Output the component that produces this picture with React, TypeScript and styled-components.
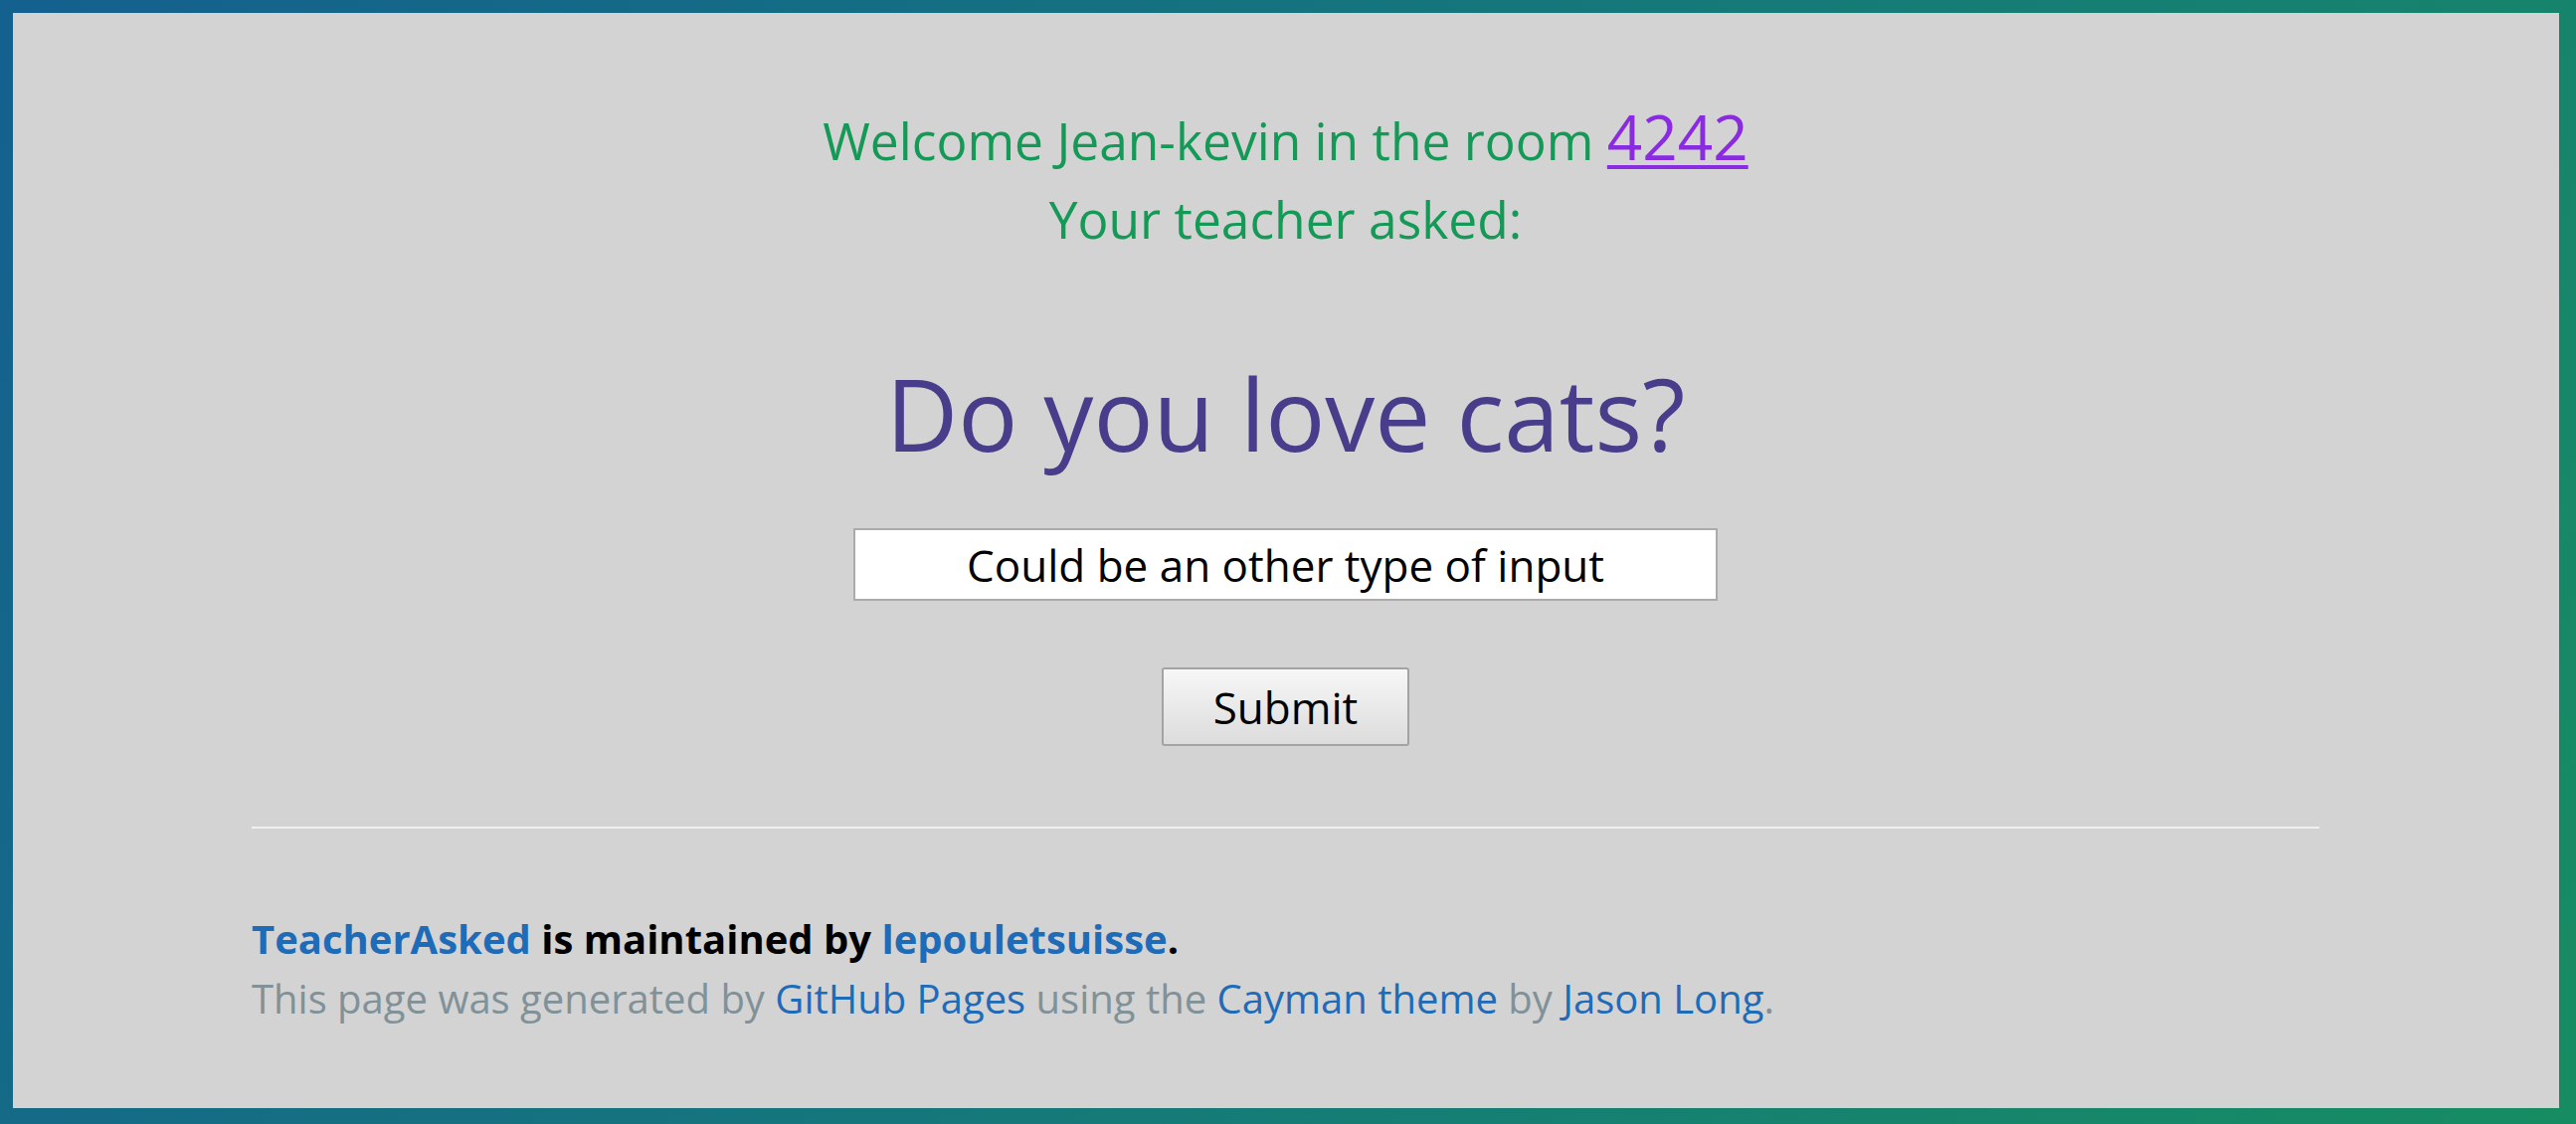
import React from "react";
import styled, { createGlobalStyle } from "styled-components";

const Global = createGlobalStyle`
  html, body { margin: 0; padding: 0; }
  body {
    font-family: "Open Sans", "Noto Sans", "Liberation Sans", sans-serif;
    background: linear-gradient(120deg, #14608f 0%, #157a78 55%, #178c62 100%);
    min-height: 100vh;
  }
  * { box-sizing: border-box; }
`;

const Frame = styled.div`
  padding: 13px 17px 16px 13px;
  height: 1130px;
`;

const Page = styled.main`
  background: #d3d3d3;
  height: 100%;
  padding: 89px 241px 0 240px;
  display: flex;
  flex-direction: column;
`;

const Greeting = styled.div`
  text-align: center;
  color: #159957;
  font-size: 51.5px;
  line-height: 79.2px;
`;

const RoomLink = styled.a`
  color: #8a2be2;
  font-size: 62px;
  line-height: 0;
  text-decoration: underline;
  text-decoration-thickness: 4px;
  text-underline-offset: 5px;
`;

const Question = styled.h1`
  margin: 80px 0 0;
  text-align: center;
  color: #483d8b;
  font-size: 100px;
  font-weight: 400;
  line-height: 150px;
`;

const Form = styled.form`
  display: flex;
  flex-direction: column;
  align-items: center;
  margin-top: 41px;
`;

const AnswerInput = styled.input`
  width: 869px;
  height: 73px;
  border: 2px solid #ababab;
  background: #fff;
  text-align: center;
  font-family: "Open Sans", "Noto Sans", sans-serif;
  font-size: 44px;
  color: #000;
  padding: 0 10px;
  outline: none;
`;

const SubmitButton = styled.button`
  margin-top: 67px;
  width: 249px;
  height: 79px;
  border: 2px solid #a3a3a3;
  border-radius: 3px;
  background: linear-gradient(#f7f7f7, #dcdcdc);
  font-family: "Open Sans", "Noto Sans", sans-serif;
  font-size: 44px;
  color: #000;
  padding: 0;
`;

const Rule = styled.hr`
  margin: 81px 0 0;
  border: 0;
  border-top: 2px solid #eff0f1;
  height: 0;
`;

const Footer = styled.footer`
  margin-top: 81px;
  font-size: 40px;
  line-height: 59.4px;
`;

const Owner = styled.div`
  font-weight: 700;
  color: #000;
`;

const Credits = styled.div`
  color: #819198;
`;

const FootLink = styled.a`
  color: #1e6bb8;
  text-decoration: none;
`;

export default function App() {
  return (
    <>
      <Global />
      <Frame>
        <Page>
          <Greeting>
            <div>
              Welcome Jean-kevin in the room <RoomLink href="#">4242</RoomLink>
            </div>
            <div>Your teacher asked:</div>
          </Greeting>
          <Question>Do you love cats?</Question>
          <Form onSubmit={(e) => e.preventDefault()}>
            <AnswerInput type="text" defaultValue="Could be an other type of input" />
            <SubmitButton type="submit">Submit</SubmitButton>
          </Form>
          <Rule />
          <Footer>
            <Owner>
              <FootLink href="#">TeacherAsked</FootLink> is maintained by{" "}
              <FootLink href="#">lepouletsuisse</FootLink>.
            </Owner>
            <Credits>
              This page was generated by <FootLink href="#">GitHub Pages</FootLink> using the{" "}
              <FootLink href="#">Cayman theme</FootLink> by <FootLink href="#">Jason Long</FootLink>.
            </Credits>
          </Footer>
        </Page>
      </Frame>
    </>
  );
}
